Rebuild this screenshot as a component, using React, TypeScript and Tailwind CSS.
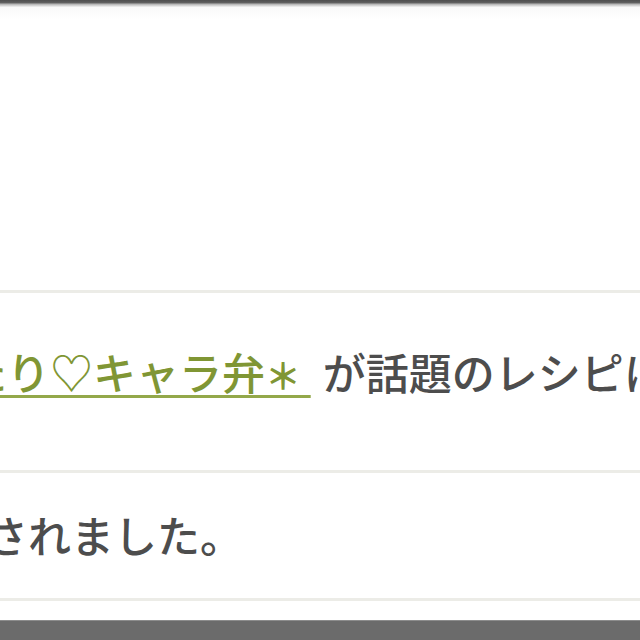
const jp = "font-['Noto_Sans_CJK_JP',sans-serif]";

export default function App() {
  return (
    <div className={`w-[640px] h-[640px] overflow-hidden bg-white flex flex-col ${jp}`}>
      {/* top edge of the window */}
      <div className="h-[7px] shrink-0 bg-[linear-gradient(to_bottom,#4e4e4e_0%,#5c5c5c_35%,#bdbdbd_65%,#f3f3f3_100%)]" />
      <div className="h-[283px] shrink-0 bg-[linear-gradient(to_bottom,#f9f9f9_0px,#ffffff_12px)]" />

      <div className="h-[3px] shrink-0 bg-[#ececE7]" />
      <div className="h-[177px] shrink-0 pt-[48px]">
        <p className="ml-[-36px] whitespace-nowrap text-[43px] leading-[60px] font-medium text-[#4d4d4d]">
          <a className="text-[#809634] underline decoration-[3px] decoration-[#93a84a] underline-offset-[5px]">
            たり♡キャラ弁<span className="text-[36px] font-bold">＊</span>{" "}
          </a>
          <span className="ml-[12px]">が話題のレシピに</span>
        </p>
      </div>

      <div className="h-[3px] shrink-0 bg-[#ececE7]" />
      <div className="h-[125px] shrink-0 pt-[31px]">
        <p className="ml-[-15px] whitespace-nowrap text-[43px] leading-[60px] font-medium text-[#4d4d4d]">
          されました。
        </p>
      </div>

      <div className="h-[3px] shrink-0 bg-[#ececE7]" />
      <div className="h-[19px] shrink-0" />
      <div className="flex-1 border-t border-[#8c8c8c] bg-[#6b6b6b]" />
    </div>
  );
}
